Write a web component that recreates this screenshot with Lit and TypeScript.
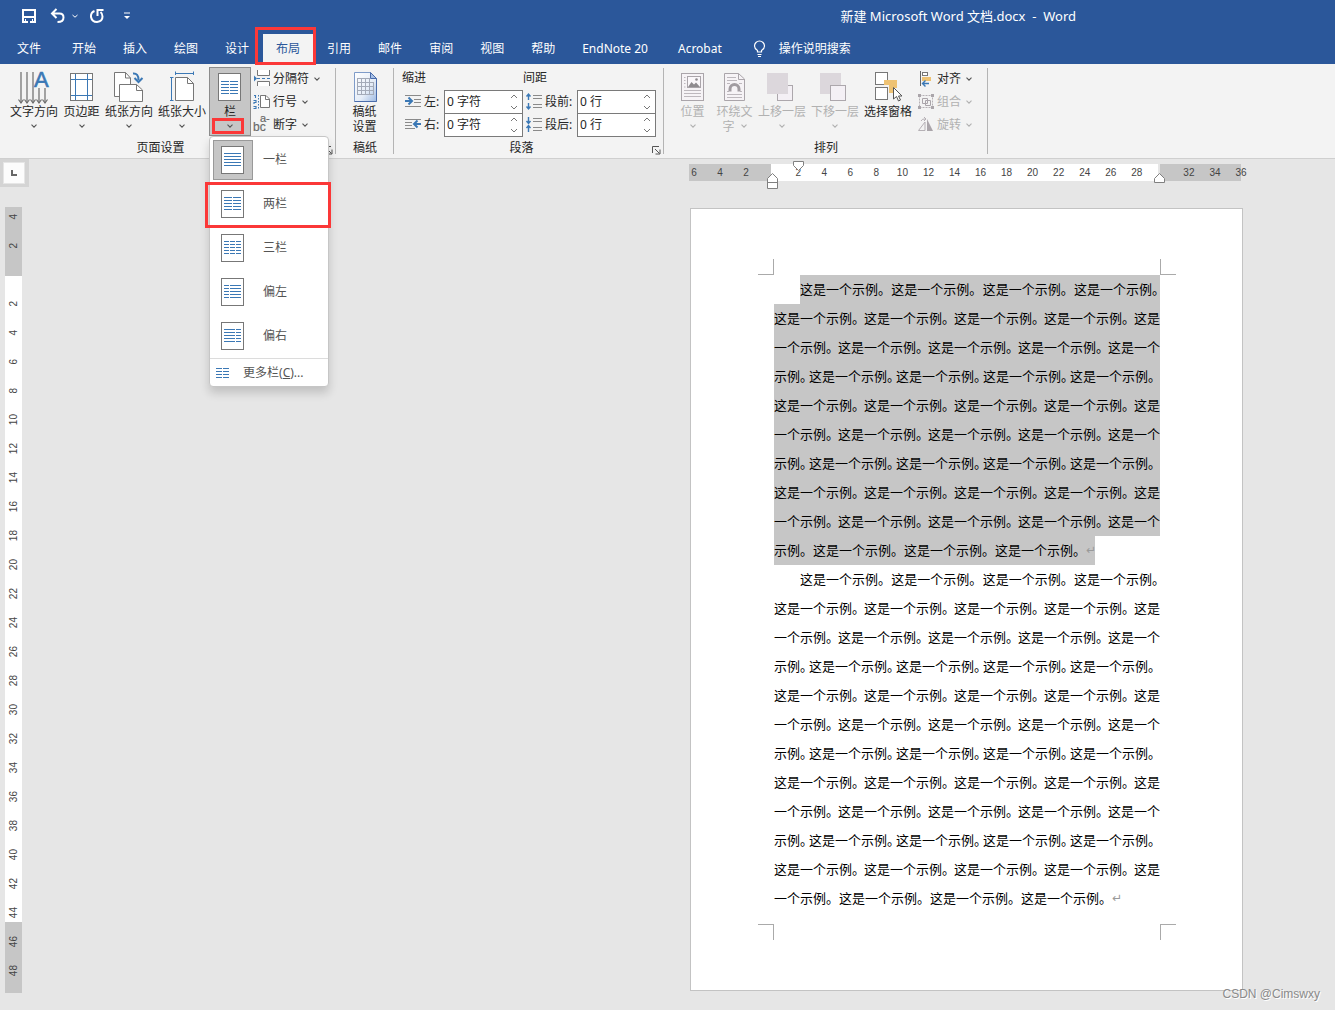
import { LitElement, html, css, svg, nothing, TemplateResult } from "lit";
import { customElement } from "lit/decorators.js";

const BLUE = "#3b78b5";
const GREY = "#777";

const icon = (w: number, h: number, body: unknown) =>
  html`<svg width=${w} height=${h} viewBox="0 0 ${w} ${h}" fill="none" aria-hidden="true">${body}</svg>`;

const chevron = (cls = "") =>
  html`<svg class="chev ${cls}" width="6" height="6" viewBox="0 0 6 6" fill="none" aria-hidden="true">
    <path d="M0.5 1.7 L3 4.2 L5.5 1.7" stroke="currentColor" stroke-width="1.1" />
  </svg>`;

const spinArrow = (d: string) =>
  html`<svg width="8" height="5" viewBox="0 0 8 5" fill="none" aria-hidden="true"><path d=${d} stroke="#777" /></svg>`;

/* Ruled lines of a page thumbnail: each pair is the start and end of a column. */
const ruled = (cols: number[][], ys: number[]) =>
  ys.map((y) => cols.map(([a, b]) => svg`<path d="M${a} ${y}.5H${b}" stroke=${BLUE} />`));

const textDirection = icon(34, 34, svg`
  <path d="M4 2V33M10 2V33M16 2V33M22 18V33M28 18V33" stroke="#6d6d6d" stroke-width="1.2"/>
  <path d="M1.5 29.5L4 33L6.500 29.5M7.5 29.5L10 33L12.500 29.5M13.5 29.5L16 33L18.500 29.5M19.5 29.5L22 33L24.500 29.5M25.5 29.5L28 33L30.500 29.5" stroke="#6d6d6d" stroke-width="1.2"/>
  <text x="17" y="17" font-family="Liberation Sans, sans-serif" font-size="22" fill=${BLUE} stroke=${BLUE} stroke-width="0.6">A</text>`);

const margins = icon(34, 34, svg`
  <rect x="5.5" y="3.5" width="22" height="27" fill="#fff" stroke=${GREY}/>
  <path d="M10.500 4V30M22.500 4V30M6 9.500H27M6 25.500H27" stroke=${BLUE}/>`);

const orientation = icon(34, 34, svg`
  <path d="M2.500 2.500H13.500L18.500 8V26.500H2.500Z" fill="#fff" stroke=${GREY}/>
  <path d="M13.500 2.500V8H18.500" stroke=${GREY}/>
  <path d="M7.500 14.500H24.500L30.500 20V31.500H7.500Z" fill="#fff" stroke=${GREY}/>
  <path d="M24.500 14.500V20.500H30.500" stroke=${GREY}/>
  <path d="M21 3.500Q26.500 3 26.500 10" stroke=${BLUE} stroke-width="2"/>
  <path d="M22.500 8L26.500 12L30.500 8" stroke=${BLUE} stroke-width="2"/>`);

const paperSize = icon(34, 34, svg`
  <path d="M10.500 7.500H22.500L28.500 13.500V30.500H10.500Z" fill="#fff" stroke=${GREY}/>
  <path d="M22.500 7.500V13.500H28.500" stroke=${GREY}/>
  <path d="M10.500 3.500H28.500M10.500 1.500V5M28.500 1.500V5M6.500 7.500V30.500M5 7.500H8.500M5 30.500H8.500" stroke=${BLUE}/>`);

const columnsIcon = icon(34, 34, svg`
  <rect x="5.500" y="3.500" width="22" height="27" fill="#fff" stroke=${GREY}/>
  ${ruled([[8, 16], [17, 25]], [11, 14, 17, 20, 23])}`);

const manuscript = icon(34, 34, svg`
  <defs><linearGradient id="sheet" x1="0" y1="0" x2="1" y2="1">
    <stop offset="0" stop-color="#fff"/><stop offset="0.6" stop-color="#e4ecf7"/><stop offset="1" stop-color="#9db9e2"/>
  </linearGradient></defs>
  <path d="M6.500 2.500H22.500L28.500 8.500V31.500H6.500Z" fill="url(#sheet)" stroke="#7f9cc9"/>
  <path d="M28.500 8.500V31.500H6.500" stroke="#4a6cab"/>
  <path d="M22.500 2.500V8.500H28.500Z" fill="#a9c1e6" stroke="#4a6cab"/>
  <path d="M9 8.500H21M9 12.500H26M9 16.500H26M9 20.500H26M9 24.500H26M9.500 8V25M13.500 8V25M17.500 8V25M21.500 8V25M25.500 12V25" stroke="#a3aab8"/>`);

const position = icon(34, 34, svg`
  <rect x="5.500" y="3.500" width="22" height="27" fill="#f6f3f6" stroke="#aaa5aa"/>
  <rect x="11.500" y="6.500" width="13" height="11" fill="#faf7fa" stroke="#aaa5aa"/>
  <path d="M12 17L15.500 12L18 14.500L20 12.500L24 17Z" fill="#8f8b8f"/><circle cx="20.500" cy="9.500" r="1.300" fill="#8f8b8f"/>
  <path d="M8 7.500H9.500M8 10.500H9.500M8 13.500H9.500M8 17H9.500M8 20.500H25M8 23.500H25M8 26.500H25" stroke="#bdb8bd"/>`);

const wrapText = icon(34, 34, svg`
  <path d="M6.500 3.500H20.500L26.500 9V30.500H6.500Z" fill="#f6f3f6" stroke="#aaa5aa"/>
  <path d="M20.500 3.500V9.500H26.500" stroke="#aaa5aa"/>
  <path d="M9 7.500H18M9 10.500H19M9 13.500H12M21 13.500H24M9 24.500H24M9 27.500H24M9 21.500H11M22 21.500H24" stroke="#bdb8bd"/>
  <path d="M12 21.500V19A4.500 4.500 0 0 1 21 19V21.500" stroke="#a19ca1" stroke-width="3"/>`);

const bringForward = icon(34, 34, svg`
  <rect x="12.500" y="15.500" width="15" height="15" fill="#f4f0f5" stroke="#aca7ac"/>
  <rect x="2" y="3" width="21" height="21" fill="#dcd7dc"/>`);

const sendBackward = icon(34, 34, svg`
  <rect x="2" y="3" width="21" height="21" fill="#dcd7dc"/>
  <rect x="12.500" y="15.500" width="15" height="15" fill="#f4f0f5" stroke="#aca7ac"/>`);

const selectionPane = icon(34, 34, svg`
  <rect x="4.500" y="2.500" width="12" height="12" fill="#fff" stroke=${GREY}/>
  <rect x="4.500" y="17.500" width="12" height="12" fill="#fff" stroke=${GREY}/>
  <path d="M13 10H26V18H22V23H18V15H13Z" fill="#eec273"/>
  <path d="M22.500 17.500V29L25.500 26.500L27.500 31L29.500 30L27.500 26H31Z" fill="#fff" stroke="#555"/>`);

const breaks = icon(18, 18, svg`
  <path d="M4.500 0V5.500H16.500V0M4.500 16V11.500H16.500V16" fill="#fff" stroke=${GREY}/>
  <path d="M4 8.500H7M9 8.500H12M14 8.500H17" stroke=${BLUE}/><path d="M1 5.500L4 8.500L1 11.500Z" fill=${BLUE}/>`);

const lineNumbers = icon(18, 18, svg`
  <path d="M7.500 2.500H13L16.500 6V14.500H7.500Z" fill="#fff" stroke=${GREY}/><path d="M12.500 2.500V6.500H16.500" stroke=${GREY}/>
  <path d="M1 2.500H2.500V5M0.500 7.500H3V9.500H1V11M0.500 13.500H3V15.500H0.500" stroke=${BLUE} stroke-width="1.1"/>
  <path d="M5.500 2V16" stroke=${BLUE} stroke-dasharray="1.500 1.500"/>`);

const hyphenation = icon(18, 18, svg`
  <g font-family="Liberation Sans, sans-serif" fill="#6a6a6a" stroke="#6a6a6a" stroke-width="0.2">
  <text x="0" y="15" font-size="12">b<tspan>c</tspan><tspan x="7" y="6" font-size="11">a-</tspan></text></g>`);

const alignIcon = icon(18, 18, svg`
  <path d="M3.500 1V16" stroke="#666"/><rect x="5.500" y="2.500" width="5" height="3" fill="#fff" stroke="#777"/>
  <rect x="5" y="7" width="9" height="4" fill="#eec273"/>
  <path d="M12 13.500H6M8.500 10.500L5.500 13.500L8.500 16.500" stroke=${BLUE} stroke-width="1.400"/>`);

const groupIcon = icon(18, 18, svg`
  <path d="M2.500 2.500H15.500V14.500H2.500Z" stroke="#b5b0b5" stroke-dasharray="2 1"/>
  <path d="M5.500 5.500H10.500V10.500H5.500ZM8.500 7.500H13.500V12.500H8.500Z" stroke="#aaa5aa"/>
  <path d="M1 1H4V4H1ZM14 1H17V4H14ZM1 13H4V16H1ZM14 13H17V16H14Z" fill="#aaa5aa"/>`);

const rotateIcon = icon(18, 18, svg`
  <path d="M1.500 14.500H8V6Z" stroke="#b5b0b5"/><path d="M10 3V15H16Z" fill="#aaa5aa"/>
  <path d="M4 5Q5 2.500 8.500 3M7 1L9 3L7 5" stroke="#b5b0b5"/>`);

const indentLeft = icon(16, 16, svg`
  <path d="M0 1.500H16M9 5.500H16M9 8.500H16M0 12.500H16" stroke="#8a8a8a"/>
  <path d="M0 7H6M3.500 3.500L7 7L3.500 10.500" stroke=${BLUE} stroke-width="2"/>`);
const indentRight = icon(16, 16, svg`
  <path d="M0 2.500H16M0 5.500H7M0 8.500H7M0 11.500H10" stroke="#8a8a8a"/>
  <path d="M16 7H10M12.500 3.500L9 7L12.500 10.500" stroke=${BLUE} stroke-width="2"/>`);
const spaceBefore = icon(16, 16, svg`
  <path d="M7 1.500H16M7 4.500H16M7 10.500H16M7 13.500H16" stroke="#8a8a8a"/>
  <path d="M2.500 6V0.500M0.500 2.500L2.500 0L4.500 2.500M2.500 9V14.500M0.500 12.500L2.500 15L4.500 12.500" stroke=${BLUE} stroke-width="1.400"/>`);
const spaceAfter = icon(16, 16, svg`
  <path d="M7 1.500H16M7 4.500H16M7 10.500H16M7 13.500H16" stroke="#8a8a8a"/>
  <path d="M2.500 0V6M0.500 4L2.500 6.500L4.500 4M2.500 15V9M0.500 11L2.500 8.500L4.500 11" stroke=${BLUE} stroke-width="1.400"/>`);

const launcher = icon(9, 9, svg`
  <path d="M0.500 7V0.500H7M3 3L7.500 7.500M8 3.500V8H3.500" stroke="#555"/>`);

const saveIcon = icon(16, 16, svg`
  <path d="M1 1H15V15H1ZM3 3V8H13V3ZM5 11V13H7V15H9V13H11V11Z" fill="#fff" fill-rule="evenodd"/>
  <path d="M4 10.500H12" stroke="#2b579a"/><path d="M3.500 10V13M12.500 10V13" stroke="#2b579a"/>`);
const undoIcon = icon(16, 16, svg`
  <path d="M6.500 1L2 5.500L6.500 10M2.500 5.500H9.500Q13.500 5.500 13.500 9.500Q13.500 14 7.500 14" stroke="#fff" stroke-width="2"/>`);
const redoIcon = icon(16, 16, svg`
  <path d="M5.500 3Q1.500 4.500 2 9Q3 14 8 14Q13.500 13.500 13.500 8.500Q13.500 5.500 11.500 4" stroke="#fff" stroke-width="2"/>
  <path d="M8.500 8V2H14.500" stroke="#fff" stroke-width="2"/>`);
const customizeIcon = icon(8, 8, svg`<path d="M1 1H7" stroke="#fff"/><path d="M1 4H7L4 7Z" fill="#fff"/>`);
const bulb = icon(14, 18, svg`
  <path d="M4.500 12V10.500Q1.500 8.500 1.500 6A5 5 0 0 1 11.500 6Q11.500 8.500 8.500 10.500V12ZM4.500 14.500H8.500M5 16.500H8" stroke="#fff" stroke-width="1.200"/>`);

const thumb = (cols: number[][]) => icon(24, 28, svg`
  <rect x="0.500" y="0.500" width="22" height="27" fill="#fff" stroke=${GREY}/>${ruled(cols, [7, 10, 13, 16, 19])}`);

type Tool = { label: TemplateResult | string; icon: TemplateResult; off?: boolean; plain?: boolean };

const tool = (t: Tool) => html`<button class="tool" ?disabled=${t.off}>
  ${t.icon}<span class="cap">${t.label}</span>${t.plain ? nothing : chevron()}
</button>`;

const smallTool = (label: string, glyph: TemplateResult, off = false) =>
  html`<button class="small" ?disabled=${off}>${glyph}<span>${label}</span>${chevron()}</button>`;

const field = (id: string, label: string, glyph: TemplateResult, value: string) => html`
  <div class="field">
    ${glyph}<label for=${id}>${label}</label>
    <span class="spin"><input id=${id} type="text" .value=${value} />
      <span class="arrows"><button aria-label="增加">${spinArrow("M1 4L4 1L7 4")}</button><button aria-label="减少">${spinArrow("M1 1L4 4L7 1")}</button></span>
    </span>
  </div>`;

const S = "这是一个示例。";
type Line = { parts: string[]; kind?: string };
const first: Line = { parts: [S, S, S, S], kind: "indent" };
const a: Line = { parts: [S, S, S, S, "这是"] };
const b: Line = { parts: ["一个示例。", S, S, S, "这是一个"] };
const c: Line = { parts: ["示例。", S, S, S, S], kind: "tight" };
const paragraphs: Line[][] = [
  [first, a, b, c, a, b, c, a, b, { parts: ["示例。", S, S, S], kind: "last" }],
  [first, a, b, c, a, b, c, a, b, c, a, { parts: ["一个示例。", S, S, S], kind: "last" }],
];

const part = (t: string) =>
  t.endsWith("。") ? html`<span>${t.slice(0, -1)}<span class="stop">。</span></span>` : html`<span>${t}</span>`;

const range = (n: number, fn: (i: number) => unknown) => Array.from({ length: n }, (_, i) => fn(i));

@customElement("app-root")
export class AppRoot extends LitElement {
  static styles = css`
    :host {
      display: flex; flex-direction: column; min-height: 100vh; position: relative; overflow: hidden;
      background: #e6e6e6; color: #262626;
      font: 12px/16px "Noto Sans", "Noto Sans CJK SC", sans-serif;
    }
    * { box-sizing: border-box; }
    button, input { font: inherit; color: inherit; border: 0; background: none; padding: 0; margin: 0; }
    svg { display: block; flex: none; overflow: visible; }
    ul, p { list-style: none; margin: 0; padding: 0; }
    a { color: inherit; text-decoration: none; }

    .mark { position: absolute; border: 3px solid #fb3838; pointer-events: none; z-index: 5; }

    .head { background: #2b579a; color: #fff; }
    .title { display: flex; align-items: center; height: 32px; padding: 0 259px 0 21px; }
    .quick { display: flex; align-items: center; }
    .quick button { display: flex; align-items: center; gap: 6px; }
    .quick .save { margin-right: 13px; }
    .quick .undo { margin-right: 11px; }
    .quick .redo { margin-right: 18px; }
    .name { margin: 0 0 0 auto; white-space: pre; font-weight: 400; font-size: 13px; }
    .tabs { display: flex; gap: 1px; height: 32px; align-items: stretch; padding-left: 4px; }
    .tabs a { display: flex; align-items: center; padding: 2px 13px 0; position: relative; }
    .tabs .file { margin-right: 4px; }
    .tabs .wide { margin-right: 3px; }
    .tabs .on { background: #f3f3f3; color: #2b579a; margin-top: 2px; padding-top: 0; }
    .tabs .on .mark { inset: -7px -3px -1px -8px; }
    .tabs .tell { gap: 12px; padding-left: 14px; }

    .ribbon { display: flex; height: 95px; background: #f3f3f3; border-bottom: 1px solid #cfcfcf; }
    .group { display: flex; flex-direction: column; padding-top: 3px; position: relative; flex: none; }
    .group::after { content: ""; position: absolute; right: 0; top: 4px; bottom: 4px; width: 1px; background: #b4b4b4; }
    .tools { display: flex; height: 69px; }
    .foot { display: flex; align-items: center; height: 22px; padding: 2px 0 0; }
    .foot h2 { flex: 1; margin: 0; font-size: 12px; font-weight: 400; text-align: center; }
    .foot button { width: 15px; padding: 5px 3px 0; }
    .setup { width: 336px; }
    .setup .tools { padding-left: 8px; }
    .draft { width: 58px; }
    .draft .tools { justify-content: center; }
    .para { width: 270px; }
    .para .tools { padding-left: 8px; }
    .arrange { width: 324px; }
    .arrange .tools { padding-left: 8px; }

    .tool { display: flex; flex-direction: column; align-items: center; padding-top: 3px; min-width: 42px; padding-left: 2px; padding-right: 3px; white-space: nowrap; }
    .cap { line-height: 15px; text-align: center; }
    .cap .chev { display: inline-block; margin-left: 6px; vertical-align: 2px; }
    .tool > .chev { margin-top: 4px; }
    .chev { color: #555; }
    button:disabled, button:disabled .chev { color: #b1b1b1; }
    .drop { position: relative; display: flex; }
    .drop .tool { background: #c6c6c6; border: 1px solid #8c8c8c; padding: 2px 0 0; }
    .drop .hot { left: 3px; top: 51px; width: 32px; height: 16px; }
    .stack { display: flex; flex-direction: column; padding-left: 2px; }
    .small { display: flex; align-items: center; height: 23px; gap: 2px; white-space: nowrap; }
    .small .chev { margin-left: 3px; }

    .col h3 { margin: 0; font-size: 12px; font-weight: 400; line-height: 16px; padding: 3px 0 4px; }
    .field { display: flex; align-items: center; height: 23px; padding-left: 3px; }
    .field label { padding-left: 3px; width: 23px; white-space: nowrap; }
    .space .field label { width: 35px; }
    .spin { display: flex; width: 79px; height: 24px; background: #fff; border: 1px solid #7a7a7a; }
    .spin input { flex: 1; width: 50px; padding: 0 2px; outline: none; }
    .arrows { display: flex; flex-direction: column; justify-content: space-around; padding-right: 4px; }
    .arrows button { display: block; }

    .menu {
      position: absolute; top: 69px; left: 0; width: 120px; z-index: 4; background: #fff;
      border: 1px solid #c6c6c6; border-radius: 4px; box-shadow: 0 6px 10px rgba(0, 0, 0, 0.16); padding-top: 1px; color: #555;
    }
    .menu li { position: relative; }
    .menu .opt { display: flex; align-items: center; height: 44px; width: 100%; padding: 0 3px; gap: 10px; }
    .pic { display: grid; place-items: center; width: 40px; height: 40px; border: 1px solid transparent; }
    .on .pic { background: #c6c6c6; border-color: #999; }
    .menu .sel { inset: 0 -3px -2px -5px; }
    .more { display: flex; align-items: center; gap: 13px; height: 28px; width: 100%; padding: 0 6px; border-top: 1px solid #dcdcdc; }

    .work { display: flex; flex: 1; align-items: flex-start; }
    .rail { width: 29px; flex: none; }
    .tabstop { display: grid; width: 29px; height: 28px; padding: 3px; background: #d4d4d4; }
    .tabstop button { display: grid; place-items: center; background: #fcfcfc; border: 1px solid #e6e6e6; width: 22px; }
    .vruler {
      display: flow-root; margin: 20px 0 0 5px; width: 17px; padding-bottom: 8px;
      background: linear-gradient(#c6c6c6 69px, #fff 69px, #fff 715px, #c6c6c6 715px);
    }
    .ruler { font: 10px/12px "Liberation Sans", sans-serif; color: #444; }
    .vruler ul { display: flex; flex-direction: column; margin-top: -5px; }
    .vruler li { display: grid; place-items: center; height: 29px; }
    .vruler li span { writing-mode: vertical-rl; transform: rotate(180deg); }

    .sheetcol { margin: 5px 92px 19px auto; width: 554px; }
    .hruler {
      position: relative; width: 552px; height: 17px;
      background: linear-gradient(90deg, #c6c6c6 82px, #fff 82px, #fff 469px, #e6e6e6 469px, #e6e6e6 471px, #c6c6c6 471px);
    }
    .hruler ul { display: flex; margin: 0 -13px 0 -8px; align-items: center; height: 17px; }
    .hruler li { flex: 1; text-align: center; }
    .grip { position: absolute; }
    .g1 { left: 104px; top: -3px; }
    .g2 { left: 78px; top: 9px; }
    .g3 { left: 465px; top: 9px; }

    .page { margin: 27px 0 0 1px; background: #fff; border: 1px solid #c3c3c3; padding: 66px 82px 66px 83px; }
    .text { position: relative; padding-bottom: 11px; font-size: 13px; line-height: 29px; color: #000; }
    .text .line { display: flex; justify-content: space-between; white-space: nowrap; height: 29px; }
    .text .line.indent { margin-left: 26px; }
    .text .line.tight { justify-content: flex-start; gap: 1px; }
    .text .line.last { justify-content: flex-start; gap: 5px; width: max-content; }
    .stop { display: inline-block; width: 8px; font-feature-settings: "halt"; }
    .ret { color: #999; font-size: 12px; font-family: "DejaVu Sans", sans-serif; width: 9px; }
    .chosen .line { background: #c6c6c6; }
    .corner { position: absolute; width: 16px; height: 16px; border: 0 solid #aaa; }
    .tl { left: -16px; top: -16px; border-width: 0 1px 1px 0; }
    .tr { right: -16px; top: -16px; border-width: 0 0 1px 1px; }
    .bl { left: -16px; bottom: -16px; border-width: 1px 1px 0 0; }
    .br { right: -16px; bottom: -16px; border-width: 1px 0 0 1px; }
    .credit { position: absolute; right: 15px; bottom: 8px; font: 12px/16px "Liberation Sans", sans-serif; color: #8a8a8a; text-shadow: 1px 1px 0 #fff; }
  `;

  private renderMenu() {
    const opts: [string, number[][]][] = [
      ["一栏", [[3, 20]]],
      ["两栏", [[3, 11], [12, 20]]],
      ["三栏", [[3, 8], [9, 14], [15, 20]]],
      ["偏左", [[3, 8], [9, 20]]],
      ["偏右", [[3, 14], [15, 20]]],
    ];
    return html`<ul class="menu">
      ${opts.map(([name, cols], i) => html`<li class=${i === 0 ? "on" : ""}>
        <button class="opt"><span class="pic">${thumb(cols)}</span><span>${name}</span></button>
        ${i === 1 ? html`<span class="mark sel"></span>` : nothing}
      </li>`)}
      <li><button class="more">${icon(14, 12, ruled([[0, 6], [7, 13]], [1, 4, 7, 10]))}<span>更多栏(<u>C</u>)...</span></button></li>
    </ul>`;
  }

  private renderRibbon() {
    return html`<div class="ribbon">
      <section class="group setup">
        <div class="tools">
          ${tool({ label: "文字方向", icon: textDirection })}
          ${tool({ label: "页边距", icon: margins })}
          ${tool({ label: "纸张方向", icon: orientation })}
          ${tool({ label: "纸张大小", icon: paperSize })}
          <div class="drop">${tool({ label: "栏", icon: columnsIcon })}<span class="mark hot"></span>${this.renderMenu()}</div>
          <div class="stack">${smallTool("分隔符", breaks)}${smallTool("行号", lineNumbers)}${smallTool("断字", hyphenation)}</div>
        </div>
        <div class="foot"><h2>页面设置</h2><button aria-label="页面设置选项">${launcher}</button></div>
      </section>
      <section class="group draft">
        <div class="tools">${tool({ label: html`稿纸<br />设置`, icon: manuscript, plain: true })}</div>
        <div class="foot"><h2>稿纸</h2></div>
      </section>
      <section class="group para">
        <div class="tools">
          <div class="col"><h3>缩进</h3>
            ${field("left", "左:", indentLeft, "0 字符")}${field("right", "右:", indentRight, "0 字符")}</div>
          <div class="col space"><h3>间距</h3>
            ${field("before", "段前:", spaceBefore, "0 行")}${field("after", "段后:", spaceAfter, "0 行")}</div>
        </div>
        <div class="foot"><h2>段落</h2><button aria-label="段落选项">${launcher}</button></div>
      </section>
      <section class="group arrange">
        <div class="tools">
          ${tool({ label: "位置", icon: position, off: true })}
          ${tool({ label: html`环绕文<br />字${chevron()}`, icon: wrapText, off: true, plain: true })}
          ${tool({ label: "上移一层", icon: bringForward, off: true })}
          ${tool({ label: "下移一层", icon: sendBackward, off: true })}
          ${tool({ label: "选择窗格", icon: selectionPane, plain: true })}
          <div class="stack">${smallTool("对齐", alignIcon)}${smallTool("组合", groupIcon, true)}${smallTool("旋转", rotateIcon, true)}</div>
        </div>
        <div class="foot"><h2>排列</h2></div>
      </section>
    </div>`;
  }

  render() {
    const tabs = ["文件", "开始", "插入", "绘图", "设计", "布局", "引用", "邮件", "审阅", "视图", "帮助", "EndNote 20", "Acrobat"];
    const kind = (i: number) => (i === 0 ? "file" : i === 5 ? "on" : i > 10 ? "wide" : "");
    return html`
      <header class="head">
        <div class="title">
          <div class="quick">
            <button class="save" aria-label="保存">${saveIcon}</button>
            <button class="undo" aria-label="撤消">${undoIcon}<svg width="6" height="6" viewBox="0 0 6 6" fill="none"><path d="M0.500 2L3 4.200L5.500 2" stroke="#fff" /></svg></button>
            <button class="redo" aria-label="重复">${redoIcon}</button>
            <button aria-label="自定义">${customizeIcon}</button>
          </div>
          <h1 class="name">新建 Microsoft Word 文档.docx  -  Word</h1>
        </div>
        <nav class="tabs">
          ${tabs.map((t, i) => html`<a href="#" class=${kind(i)}>${t}${i === 5 ? html`<span class="mark"></span>` : nothing}</a>`)}
          <a href="#" class="tell">${bulb}<span>操作说明搜索</span></a>
        </nav>
      </header>
      ${this.renderRibbon()}
      <main class="work">
        <div class="rail">
          <div class="tabstop"><button aria-label="制表符">${icon(6, 6, svg`<path d="M1 0V5H6" stroke="#666" stroke-width="2"/>`)}</button></div>
          <div class="vruler ruler"><ul>
            ${range(27, (i) => html`<li><span>${i === 2 ? "" : Math.abs(i - 2) * 2}</span></li>`)}
          </ul></div>
        </div>
        <div class="sheetcol">
          <div class="hruler ruler">
            <ul>${range(22, (i) => html`<li>${i === 3 || i === 18 ? "" : Math.abs(i - 3) * 2}</li>`)}</ul>
            <span class="grip g1">${icon(11, 10, svg`<path d="M0.500 0.500H10.500V4.500L5.500 9.500L0.500 4.500Z" fill="#fff" stroke="#808080"/>`)}</span>
            <span class="grip g2">${icon(11, 16, svg`<path d="M5.500 0.500L10.500 5.500V15.500H0.500V5.500ZM0.500 9.500H10.500" fill="#fff" stroke="#808080"/>`)}</span>
            <span class="grip g3">${icon(11, 10, svg`<path d="M5.500 0.500L10.500 5.500V9.500H0.500V5.500Z" fill="#fff" stroke="#808080"/>`)}</span>
          </div>
          <article class="page">
            <div class="text">
              ${paragraphs.map((lines, i) => html`<div class=${i === 0 ? "chosen" : ""}>
                ${lines.map((l) => html`<div class="line ${l.kind ?? ""}">${l.parts.map(part)}${l.kind === "last" ? html`<span class="ret">↵</span>` : nothing}</div>`)}
              </div>`)}
              <i class="corner tl"></i><i class="corner tr"></i><i class="corner bl"></i><i class="corner br"></i>
            </div>
          </article>
        </div>
      </main>
      <span class="credit">CSDN @Cimswxy</span>`;
  }
}
